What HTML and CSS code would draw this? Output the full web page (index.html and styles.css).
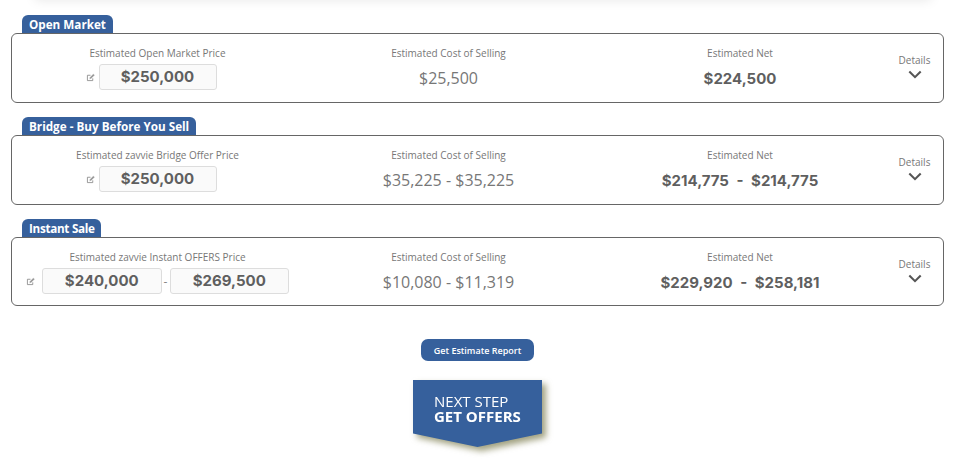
FILE: index.html
```html
<!DOCTYPE html>
<html lang="en">
<head>
<meta charset="utf-8">
<title>Estimate</title>
<link rel="stylesheet" href="styles.css">
</head>
<body>
<div class="top-shadow"></div>
<main class="page">
  <section class="group">
    <h2 class="tab">Open Market</h2>
    <div class="card">
      <div class="col">
        <div class="label">Estimated Open Market Price</div>
        <div class="inputs">
          <svg class="edit" viewBox="0 0 16 16"><path class="frame" d="M12 9.500v4H2.500V4H8"/><path class="pen" d="M6 11l.6-3L13 1.500l2.500 2.500L9 10.400z"/></svg>
          <div class="box">$250,000</div>
        </div>
      </div>
      <div class="col">
        <div class="label">Estimated Cost of Selling</div>
        <div class="value">$25,500</div>
      </div>
      <div class="col">
        <div class="label">Estimated Net</div>
        <div class="value strong">$224,500</div>
      </div>
      <div class="details">
        <span>Details</span>
        <svg class="chev" viewBox="0 0 16 10"><path d="M1.500 1.500 8 8l6.500-6.500"/></svg>
      </div>
    </div>
  </section>
  <section class="group">
    <h2 class="tab">Bridge - Buy Before You Sell</h2>
    <div class="card">
      <div class="col">
        <div class="label">Estimated zavvie Bridge Offer Price</div>
        <div class="inputs">
          <svg class="edit" viewBox="0 0 16 16"><path class="frame" d="M12 9.500v4H2.500V4H8"/><path class="pen" d="M6 11l.6-3L13 1.500l2.500 2.500L9 10.400z"/></svg>
          <div class="box">$250,000</div>
        </div>
      </div>
      <div class="col">
        <div class="label">Estimated Cost of Selling</div>
        <div class="value">$35,225 - $35,225</div>
      </div>
      <div class="col">
        <div class="label">Estimated Net</div>
        <div class="value strong">$214,775 - $214,775</div>
      </div>
      <div class="details">
        <span>Details</span>
        <svg class="chev" viewBox="0 0 16 10"><path d="M1.500 1.500 8 8l6.500-6.500"/></svg>
      </div>
    </div>
  </section>
  <section class="group">
    <h2 class="tab tight">Instant Sale</h2>
    <div class="card">
      <div class="col">
        <div class="label">Estimated zavvie Instant OFFERS Price</div>
        <div class="inputs range">
          <svg class="edit" viewBox="0 0 16 16"><path class="frame" d="M12 9.500v4H2.500V4H8"/><path class="pen" d="M6 11l.6-3L13 1.500l2.500 2.500L9 10.400z"/></svg>
          <div class="box">$240,000</div>
          <span class="dash">-</span>
          <div class="box">$269,500</div>
        </div>
      </div>
      <div class="col">
        <div class="label">Estimated Cost of Selling</div>
        <div class="value">$10,080 - $11,319</div>
      </div>
      <div class="col">
        <div class="label">Estimated Net</div>
        <div class="value strong">$229,920 - $258,181</div>
      </div>
      <div class="details">
        <span>Details</span>
        <svg class="chev" viewBox="0 0 16 10"><path d="M1.500 1.500 8 8l6.500-6.500"/></svg>
      </div>
    </div>
  </section>
  <div class="actions">
    <button class="report">Get Estimate Report</button>
    <div class="next-wrap">
      <div class="next"><span class="next-line">NEXT STEP</span><b class="next-line">GET OFFERS</b></div>
    </div>
  </div>
</main>
</body>
</html>
```
FILE: styles.css
```css
* { box-sizing: border-box; }
html, body { margin: 0; padding: 0; height: 463px; overflow: hidden; background: #fff; }
body { font-family: "Open Sans", sans-serif; color: #666; position: relative; }
.top-shadow {
  position: absolute; left: 35px; right: 35px; top: -12px; height: 12px;
  box-shadow: 0 0 12px rgba(0,0,0,.1);
}
.page { width: 933px; margin-left: 11px; padding-top: 15px; }
.group { margin-bottom: 14px; }
.tab {
  display: table; margin: 0 0 0 11px; height: 18px; padding: 0 7px;
  background: #36609c; color: #fff; font-size: 11.700px; font-weight: 700; line-height: 18px;
  border-radius: 6px 6px 0 0;
}
.tab.tight { letter-spacing: -.3px; padding-right: 6px; }
.card {
  display: grid; grid-template-columns: 291px 291px 292px 1fr;
  height: 70px; border: 1px solid #666; border-radius: 6px;
}
.group:nth-child(3) .card { height: 69px; }
.col { display: flex; flex-direction: column; align-items: center; padding-top: 13px; }
.label { font-size: 10px; line-height: 13px; color: #777; white-space: nowrap; }
.inputs { display: flex; align-items: center; margin-top: 4px; margin-right: 13px; }
.inputs.range { margin-right: 0; }
.edit { width: 9px; height: 9px; margin-right: 4px; fill: none; }
.edit .frame { stroke: #888; stroke-width: 1.500; }
.edit .pen { fill: #999; stroke: #fff; stroke-width: .6; }
.range .edit { margin-right: 7px; }
.box {
  width: 118px; height: 26px; border: 1px solid #ddd; border-radius: 3px; background: #fafafa;
  font-family: Inter, "Open Sans", sans-serif;
  font-size: 15px; font-weight: 700; line-height: 24px; text-align: center; color: #5f5f5f;
}
.range .box { width: 119.500px; }
.dash { width: 8px; text-align: center; font-size: 12px; color: #888; }
.value { font-size: 16px; line-height: 26px; margin-top: 5px; color: #777; white-space: nowrap; }
.value.strong { font-family: Inter, "Open Sans", sans-serif; font-size: 15px; font-weight: 700; word-spacing: 4px; margin-top: 6px; color: #5f5f5f; }
.details { display: flex; flex-direction: column; align-items: center; padding-top: 20px; font-size: 10px; line-height: 13px; color: #777; }
.chev { width: 14px; height: 9px; margin-top: 3px; fill: none; stroke: #555; stroke-width: 2.400; }
.actions { display: flex; flex-direction: column; align-items: center; padding-top: 19px; }
.report {
  width: 113px; height: 22px; padding: 0; border: 0; border-radius: 7px; background: #36609c; color: #fff;
  font-family: inherit; font-size: 9px; font-weight: 600;
}
.next-wrap { margin-top: 19px; filter: drop-shadow(4px 4px 3px rgba(110,110,60,.65)); }
.next {
  width: 129px; height: 67px; padding: 14px 0 0 21px; background: #36609c; color: #fff;
  font-size: 15px; line-height: 15px;
  clip-path: polygon(0 0, 100% 0, 100% 80%, 50% 100%, 0 80%);
}
.next-line { display: block; }
```
